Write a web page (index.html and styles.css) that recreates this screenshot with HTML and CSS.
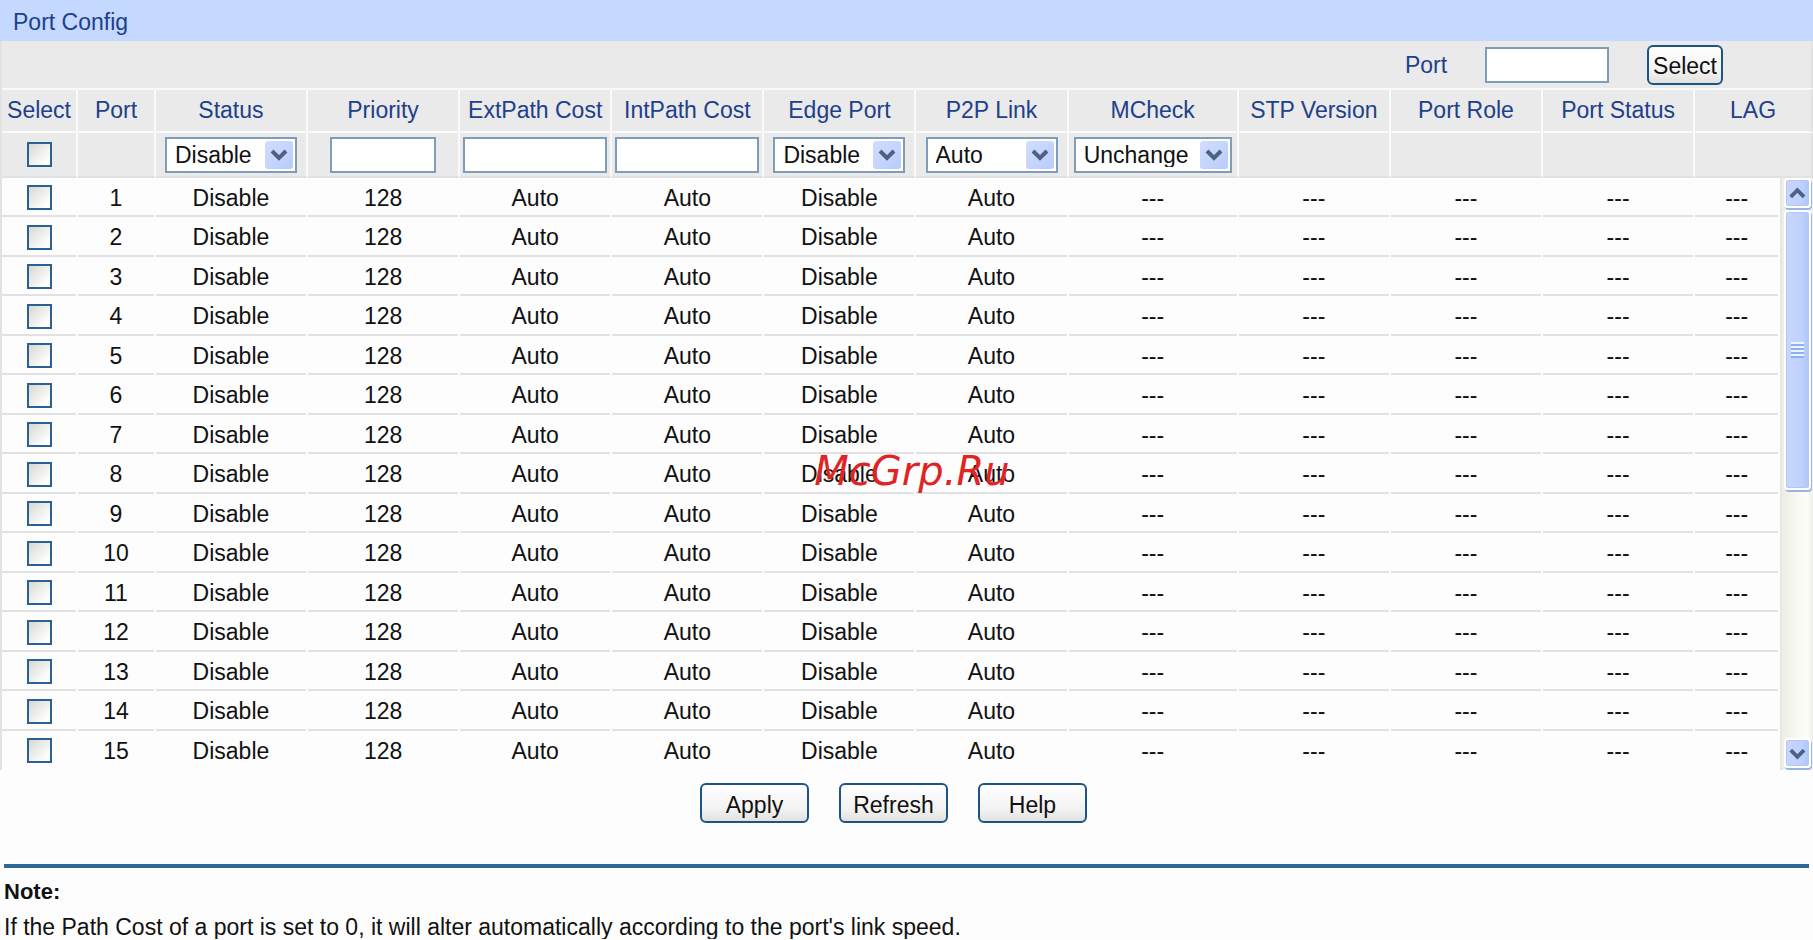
FILE: index.html
```html
<!DOCTYPE html>
<html lang="en">
<head>
    <meta charset="UTF-8">
    <meta name="viewport" content="width=device-width, initial-scale=1.0">
    <title>Port Config</title>
    <link rel="stylesheet" href="styles.css">
</head>
<body>
    <h1 class="title">Port Config</h1>

    <div class="toolbar">
        <label for="portSearch">Port</label>
        <input type="text" class="text-box" id="portSearch">
        <button type="button" class="btn">Select</button>
    </div>

    <table class="ports">
        <colgroup>
            <col class="col-select">
            <col class="col-port">
            <col class="col-std" span="6">
            <col class="col-mcheck">
            <col class="col-std" span="3">
            <col class="col-lag">
            <col>
        </colgroup>
        <thead>
            <tr>
                <th>Select</th>
                <th>Port</th>
                <th>Status</th>
                <th>Priority</th>
                <th>ExtPath Cost</th>
                <th>IntPath Cost</th>
                <th>Edge Port</th>
                <th>P2P Link</th>
                <th>MCheck</th>
                <th>STP Version</th>
                <th>Port Role</th>
                <th>Port Status</th>
                <th colspan="2">LAG</th>
            </tr>
            <tr class="edit">
                <td><input type="checkbox" aria-label="Select all"></td>
                <td></td>
                <td>
                    <span class="drop">
                        <select aria-label="Status"><option>Disable</option><option>Enable</option></select>
                        <svg viewBox="0 0 28 28"><path d="M7 10l7 7 7-7"/></svg>
                    </span>
                </td>
                <td><input type="text" class="text-box priority" aria-label="Priority"></td>
                <td><input type="text" class="text-box cost" aria-label="ExtPath Cost"></td>
                <td><input type="text" class="text-box cost" aria-label="IntPath Cost"></td>
                <td>
                    <span class="drop">
                        <select aria-label="Edge Port"><option>Disable</option><option>Enable</option></select>
                        <svg viewBox="0 0 28 28"><path d="M7 10l7 7 7-7"/></svg>
                    </span>
                </td>
                <td>
                    <span class="drop">
                        <select aria-label="P2P Link"><option>Auto</option><option>Open</option><option>Close</option></select>
                        <svg viewBox="0 0 28 28"><path d="M7 10l7 7 7-7"/></svg>
                    </span>
                </td>
                <td>
                    <span class="drop wide">
                        <select aria-label="MCheck"><option>Unchange</option><option>Enable</option></select>
                        <svg viewBox="0 0 28 28"><path d="M7 10l7 7 7-7"/></svg>
                    </span>
                </td>
                <td></td>
                <td></td>
                <td></td>
                <td colspan="2"></td>
            </tr>
        </thead>
        <tbody id="portRows"></tbody>
    </table>

    <template id="scrollCell">
        <td class="scroll-cell" rowspan="15">
            <div class="scrollbar">
                <button type="button" class="arrow" aria-label="Scroll up"><svg viewBox="0 0 24 26"><path d="M5 17l7-7 7 7"/></svg></button>
                <div class="thumb"><span class="grip"></span></div>
                <div class="track"></div>
                <button type="button" class="arrow" aria-label="Scroll down"><svg viewBox="0 0 24 26"><path d="M5 10l7 7 7-7"/></svg></button>
            </div>
        </td>
    </template>

    <div class="actions">
        <button type="button" class="btn action">Apply</button>
        <button type="button" class="btn action">Refresh</button>
        <button type="button" class="btn action">Help</button>
    </div>

    <div class="note">
        <h2>Note:</h2>
        <p>If the Path Cost of a port is set to 0, it will alter automatically according to the port's link speed.</p>
    </div>

    <div class="watermark">McGrp.Ru</div>

    <script>
        const values = ['Disable', '128', 'Auto', 'Auto', 'Disable', 'Auto', '---', '---', '---', '---', '---'];
        const body = document.getElementById('portRows');

        for (let port = 1; port <= 15; port++) {
            const row = document.createElement('tr');
            row.innerHTML = '<td><input type="checkbox" aria-label="Port ' + port + '"></td>' +
                '<td>' + port + '</td>' +
                values.map(value => '<td>' + value + '</td>').join('');
            body.appendChild(row);
        }

        // the scrollbar sits in the last column, next to all rows
        body.rows[0].appendChild(document.getElementById('scrollCell').content);
    </script>
</body>
</html>
```
FILE: styles.css
```css
* {
    box-sizing: border-box;
}

body {
    margin: 0;
    position: relative;
    background-color: #fdfdfd;
    color: #111;
    font-family: "Liberation Sans", Arial, sans-serif;
    font-size: 23px;
    line-height: 24px;
}

input,
select,
button {
    margin: 0;
    font: inherit;
    color: inherit;
}

.title {
    margin: 0;
    padding: 10px 13px 7px;
    background-color: #c5d8ff;
    color: #20408a;
    font-size: 23px;
    font-weight: normal;
}

.toolbar {
    display: flex;
    align-items: center;
    justify-content: flex-end;
    height: 47px;
    padding-right: 88px;
    background-color: #eaeaea;
    border: solid #e2e2e2;
    border-width: 0 2px;
    color: #20408a;
}

.toolbar label {
    margin-right: 38px;
}

.text-box {
    display: block;
    width: 124px;
    height: 36px;
    margin: 0 auto;
    padding: 0 6px;
    border: 2px solid #7f9db9;
    background-color: #fff;
}

.toolbar .text-box {
    margin: 0 38px 0 0;
}

.text-box.priority {
    width: 106px;
}

.text-box.cost {
    width: 144px;
}

.btn {
    height: 40px;
    padding: 3px 4px 0;
    border: 2px solid #1c5488;
    border-radius: 6px;
    background: linear-gradient(#fff, #f1f1f1 70%, #e2e1dc);
    color: #111;
}

.ports {
    width: 100%;
    table-layout: fixed;
    border-collapse: separate;
    border-spacing: 0;
    border-left: 2px solid #e2e2e2;
}

.col-select {
    width: 4.2%;
}

.col-port {
    width: 4.3%;
}

.col-std {
    width: 8.4%;
}

.col-mcheck {
    width: 9.4%;
}

.col-lag {
    width: 4.7%;
}

.ports th,
.ports td {
    padding: 0;
    text-align: center;
    vertical-align: middle;
    white-space: nowrap;
}

.ports thead th,
.ports thead td {
    background-color: #eaeaea;
    border-right: 2px solid #fafafa;
}

.ports thead th:last-child,
.ports thead td:last-child {
    border-right-color: #e2e2e2;
}

.ports th {
    height: 45px;
    padding-bottom: 2px;
    border-top: 2px solid #fafafa;
    border-bottom: 2px solid #fafafa;
    color: #20408a;
    font-weight: normal;
}

.ports .edit td {
    height: 45px;
    border-bottom: 2px solid #e2e2e2;
}

.ports tbody td {
    height: 39px;
    padding-right: 2px;
    /* grey line under each cell, broken at the column edges */
    background: linear-gradient(#e2e2e2, #e2e2e2) left bottom / calc(100% - 2px) 2px no-repeat;
}

.ports tbody tr:nth-child(even) td {
    height: 40px;
}

.ports tbody tr:last-child td {
    background: none;
}

input[type="checkbox"] {
    display: block;
    appearance: none;
    width: 25px;
    height: 25px;
    margin: 0 auto;
    border: 2px solid #2a6093;
    background: linear-gradient(135deg, #d8d8d2, #fff 85%);
}

input[type="checkbox"]:checked {
    background: #2a6093;
    box-shadow: inset 0 0 0 4px #fff;
}

.drop {
    display: block;
    position: relative;
    width: 132px;
    margin: 0 auto;
}

.drop.wide {
    width: 158px;
}

.drop select {
    display: block;
    appearance: none;
    width: 100%;
    height: 36px;
    padding: 0 32px 0 8px;
    border: 2px solid #7f9db9;
    border-radius: 0;
    background-color: #fff;
}

.drop svg {
    position: absolute;
    top: 4px;
    right: 4px;
    width: 28px;
    height: 28px;
    border-radius: 3px;
    background: linear-gradient(135deg, #d3defd, #b7cbfc);
    pointer-events: none;
}

.drop path,
.arrow path {
    fill: none;
    stroke: #4d6185;
    stroke-width: 4;
}

.ports tbody .scroll-cell {
    height: 592px;
    padding: 0;
    background: none;
}

.scrollbar {
    display: flex;
    flex-direction: column;
    height: 592px;
    padding: 0 2px 2px;
    border-left: 2px solid #e6e6e2;
    background: linear-gradient(90deg, #eeeee8, #fdfdfa 80%, #f0f0ea);
}

.arrow,
.thumb {
    flex: none;
    border: 2px solid #fff;
    border-radius: 4px;
    background: linear-gradient(90deg, #cad6fc, #bed0fd 70%, #aec5f8);
    box-shadow: inset 0 0 0 1px #b4c6f5, 1px 2px 0 #98b4e2;
}

.arrow {
    height: 30px;
    padding: 0;
}

.arrow svg {
    display: block;
    width: 100%;
    height: 26px;
}

.thumb {
    display: flex;
    align-items: center;
    justify-content: center;
    height: 280px;
    margin-top: 2px;
}

.grip {
    width: 13px;
    height: 16px;
    background: repeating-linear-gradient(#eef4fe 0 2px, #8cb0f8 2px 4px);
}

.track {
    flex: 1;
}

.actions {
    display: flex;
    justify-content: center;
    gap: 30px;
    padding: 13px 26px 41px 0;
}

.btn.action {
    width: 109px;
}

.note {
    margin: 0 4px;
    padding-top: 12px;
    border-top: 4px solid #2c6898;
}

.note h2 {
    margin: 0 0 11px;
    font-size: 22px;
}

.note p {
    margin: 0;
}

.watermark {
    position: absolute;
    top: 449px;
    left: 50.3%;
    transform: translateX(-50%);
    color: #e02424;
    font: italic 40px/44px "DejaVu Sans", Verdana, sans-serif;
    pointer-events: none;
}
```
